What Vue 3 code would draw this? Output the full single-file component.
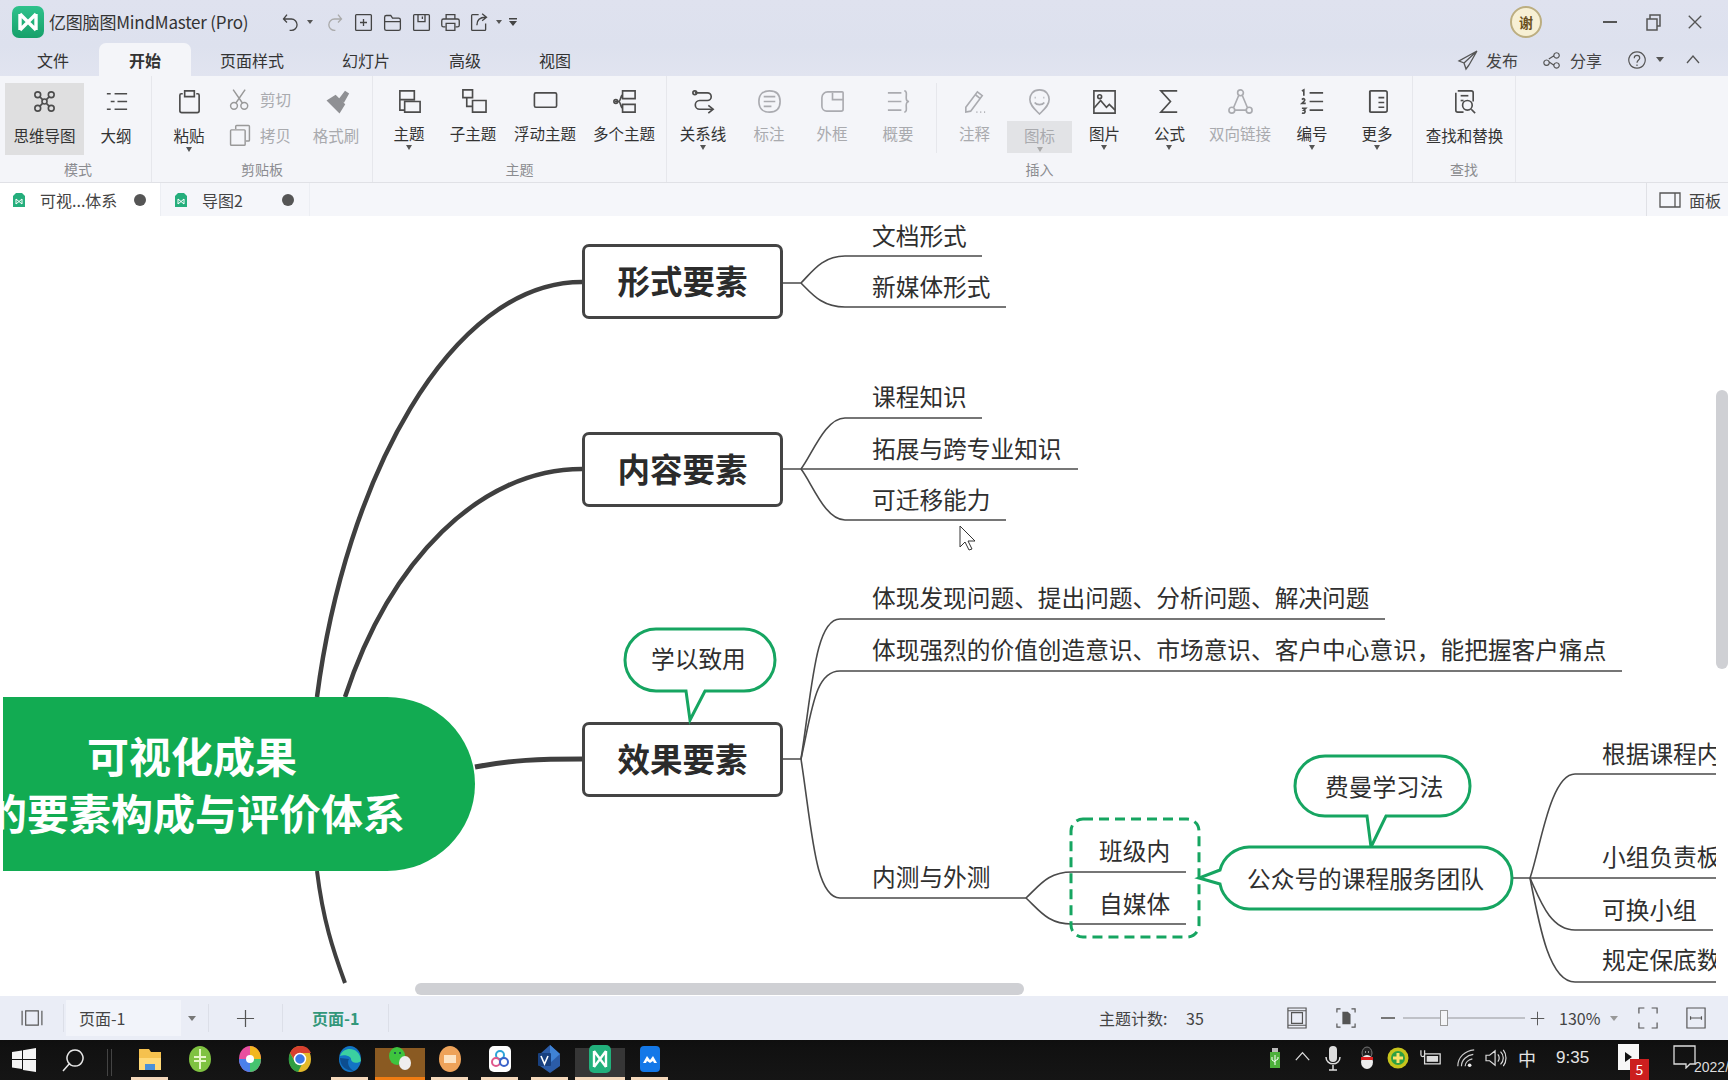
<script setup>
const c = (x, y, r) => `M${x - r} ${y}a${r} ${r} 0 1 0 ${2 * r} 0a${r} ${r} 0 1 0 ${-2 * r} 0Z`
const ICONS = {
  map: [c(7, 7, 3), c(21, 7, 3), c(7, 21, 3), c(21, 21, 3), 'M9 9l3 3M19 9l-3 3M9 19l3-3M19 19l-3-3', c(14, 14, 2.6)],
  outline: ['M4 6h4M12 6h13M8 14h4M15 14h10M4 22h4M12 22h13'],
  paste: ['M7 6h-1.5a1.5 1.5 0 0 0-1.5 1.5v16a2 2 0 0 0 2 2h16a2 2 0 0 0 2-2v-16a1.5 1.5 0 0 0-1.5-1.5H21', 'M9 3h10v6H9z'],
  brush: ['M13 8l9 9-5 8-12-12z', 'M17 12l6-8 3 2-5 9'],
  topic: ['M4 3h15v9H4zM4 12v11h5M9 14h16v11H9z'],
  subtopic: ['M3 2h10v8H3zM7 10v9h6M13 13h14v12H13z'],
  floating: ['M4 5h20a1.500 1.500 0 0 1 1.500 1.500v12a1.500 1.500 0 0 1-1.500 1.500H4a1.500 1.500 0 0 1-1.500-1.500v-12A1.500 1.500 0 0 1 4 5z'],
  multi: ['M12 3h13v8H12zM12 17h13v8H12zM4 14h4M8 14c2 0 2-7 4-7M8 14c2 0 2 7 4 7', c(5, 14, 2)],
  relation: ['M5 5h13a4 4 0 0 1 0 8h-8a4 4 0 0 0 0 9h13', 'M19 18l5 4-5 4', c(5, 5, 2)],
  callout: ['M14 3c7 0 11 4 11 11s-4 11-11 11c-7 0-11-4-11-11s4-11 11-11z', 'M8 9h12M8 14h12M8 19h8'],
  frame: ['M9 4h15a1 1 0 0 1 1 1v17a2 2 0 0 1-2 2H8a5 5 0 0 1-5-5v-9a6 6 0 0 1 6-6z', 'M14 5v7h11'],
  summary: ['M3 5h14M3 14h14M3 23h14', 'M20 3c3 0 2 4 2 7s1 4 3 4c-2 0-3 1-3 4s1 7-2 7'],
  note: ['M5 20L17 4l5 4L10 24l-5 1z', 'M15 7l5 4', 'M16 25h1M20 25h1M24 25h1'],
  emoji: ['M14 2c7 0 10 5 10 10 0 6-5 10-10 15-5-5-10-9-10-15 0-5 3-10 10-10z', 'M9 10h1M18 10h1', 'M9 15c2 3 8 3 10 0'],
  image: ['M3 3h22v23H3z', 'M3 21l7-8 6 7 3-3 6 6', c(9, 9, 2)],
  sum: ['M22 3H5l10 11L5 25h17'],
  link: [c(14, 5, 3), c(5, 23, 3), c(23, 23, 3), 'M12 8l-5 12M16 8l5 12M8 23h12'],
  number: ['M11 5h14M11 14h14M11 23h14', 'M3 3l2-1v6M3 12c2-2 4 0 2 2l-2 2h4M3 21h4l-2 2c2 0 2 4-2 3'],
  more: ['M7 3h15a2 2 0 0 1 2 2v18a2 2 0 0 1-2 2H7a1 1 0 0 1-1-1V4a1 1 0 0 1 1-1z', 'M15 10h6M15 15h6M15 20h6', 'M6 3v22'],
  find: ['M7 3h14a2 2 0 0 1 2 2v9M13 25H7a2 2 0 0 1-2-2V5', 'M10 8h8', c(17, 18, 5), 'M21 22l4 4', 'M10 13h3'],
  scissors: [c(7, 22, 4), c(19, 22, 4), 'M9 19L20 3M17 19L6 3'],
  copy: ['M9 7V4a1 1 0 0 1 1-1h14a1 1 0 0 1 1 1v16a1 1 0 0 1-1 1h-3', 'M4 8h15a1 1 0 0 1 1 1v16a1 1 0 0 1-1 1H4a1 1 0 0 1-1-1V9a1 1 0 0 1 1-1z']
}
const groups = [
  { label: '模式', w: 152, pad: 5, items: [
    { t: '思维导图', i: 'map', w: 79, on: true }, { t: '大纲', i: 'outline', w: 64 } ] },
  { label: '剪贴板', w: 221, pad: 0, items: [
    { t: '粘贴', i: 'paste', w: 74, caret: true }, { clip: true, w: 74 }, { t: '格式刷', i: 'brush', w: 72, dim: true } ] },
  { label: '主题', w: 294, pad: 0, tight: true, items: [
    { t: '主题', i: 'topic', w: 72, caret: true }, { t: '子主题', i: 'subtopic', w: 56 }, { t: '浮动主题', i: 'floating', w: 88 }, { t: '多个主题', i: 'multi', w: 70 } ] },
  { label: '插入', w: 746, pad: 0, tight: true, items: [
    { t: '关系线', i: 'relation', w: 72, caret: true }, { t: '标注', i: 'callout', w: 60, dim: true }, { t: '外框', i: 'frame', w: 66, dim: true }, { t: '概要', i: 'summary', w: 66, dim: true },
    { sep: true },
    { t: '注释', i: 'note', w: 65, dim: true }, { t: '图标', i: 'emoji', w: 65, dim: true, caret: true, hl: true }, { t: '图片', i: 'image', w: 65, caret: true }, { t: '公式', i: 'sum', w: 65, caret: true }, { t: '双向链接', i: 'link', w: 76, dim: true }, { t: '编号', i: 'number', w: 68, caret: true }, { t: '更多', i: 'more', w: 62, caret: true } ] },
  { label: '查找', w: 103, pad: 0, items: [ { t: '查找和替换', i: 'find', w: 103 } ] }
]
const menus = [
  { t: '文件', w: 85 }, { t: '开始', w: 92, on: true }, { t: '页面样式', w: 122 }, { t: '幻灯片', w: 106 }, { t: '高级', w: 92 }, { t: '视图', w: 88 }
]
const labels = [
  { t: '文档形式', x: 872, y: 237 }, { t: '新媒体形式', x: 872, y: 288 },
  { t: '课程知识', x: 872, y: 398 }, { t: '拓展与跨专业知识', x: 872, y: 450 }, { t: '可迁移能力', x: 872, y: 501 },
  { t: '体现发现问题、提出问题、分析问题、解决问题', x: 872, y: 599 },
  { t: '体现强烈的价值创造意识、市场意识、客户中心意识，能把握客户痛点', x: 872, y: 651 },
  { t: '内测与外测', x: 872, y: 878 }, { t: '班级内', x: 1099, y: 852 }, { t: '自媒体', x: 1099, y: 905 },
  { t: '根据课程内', x: 1602, y: 755 }, { t: '小组负责板', x: 1602, y: 858 }, { t: '可换小组', x: 1602, y: 911 }, { t: '规定保底数', x: 1602, y: 961 }
]
const boxes = [
  { t: '形式要素', y: 244 }, { t: '内容要素', y: 432 }, { t: '效果要素', y: 722 }
]
const thin = [
  'M782 283H801C812 272 822 256 845 256H982', 'M801 283C812 294 822 307 845 307H1006',
  'M782 469H801C812 455 825 418 845 418H982', 'M801 469H1078', 'M801 469C812 483 825 520 845 520H1006',
  'M782 759H801C812 690 815 619 840 619H1385', 'M801 759C812 710 815 671 840 671H1622', 'M801 759C812 830 815 898 840 898H1026',
  'M1026 898C1040 885 1048 872 1072 872H1186', 'M1026 898C1040 911 1048 924 1072 924H1186',
  'M1512 878H1530C1540 850 1550 774 1575 774H1716', 'M1530 878H1716', 'M1530 878C1540 900 1550 930 1575 930H1713', 'M1530 878C1540 930 1550 982 1575 982H1716'
]
const thick = [
  { d: 'M317 697C345 480 450 282 582 282', w: 4.5 }, { d: 'M345 697C390 560 480 469 582 469', w: 4.5 },
  { d: 'M475 767C510 760 540 759 582 759', w: 5 }, { d: 'M317 871C323 920 333 950 345 983', w: 4 }
]
const tiles = [
  { k: 'files' }, { k: 'green' }, { k: 'color' }, { k: 'chrome' }, { k: 'edge' }, { k: 'wechat', on: 'w' }, { k: 'orange' }, { k: 'cloud' }, { k: 'visio' }, { k: 'mm', on: 'm' }, { k: 'blue' }
]
</script>

<template>
  <div class="app">
    <header class="title">
      <div class="row-top">
        <svg class="logo" viewBox="0 0 32 32">
          <defs><linearGradient id="lg" x1="0" y1="0" x2="0" y2="1"><stop offset="0" stop-color="#2fc28c" /><stop offset="1" stop-color="#16a06a" /></linearGradient></defs>
          <rect width="32" height="32" rx="7" fill="url(#lg)" />
          <path d="M8 8v16M24 8v16M8 8l16 16M24 8L8 24" fill="none" stroke="#fff" stroke-width="3.4" />
        </svg>
        <span class="app-name">亿图脑图MindMaster (Pro)</span>
        <div class="quick">
          <svg class="q" viewBox="0 0 24 24"><path d="M8 3L4 8l4 4M4 8h9a6 6 0 0 1 0 13h-2" /></svg>
          <i class="caret small-c" />
          <svg class="q faint" viewBox="0 0 24 24"><path d="M16 3l4 5-4 4M20 8h-8a6 6 0 0 0 0 13h1" /></svg>
          <svg class="q" viewBox="0 0 24 24"><path d="M4 3h16a1 1 0 0 1 1 1v16a1 1 0 0 1-1 1H4a1 1 0 0 1-1-1V4a1 1 0 0 1 1-1zM12 8v8M8 12h8" /></svg>
          <svg class="q" viewBox="0 0 24 24"><path d="M3 19V6a2 2 0 0 1 2-2h5l2 3h7a2 2 0 0 1 2 2v10a2 2 0 0 1-2 2H5a2 2 0 0 1-2-2zM3 11h18" /></svg>
          <svg class="q" viewBox="0 0 24 24"><path d="M4 3h16a1 1 0 0 1 1 1v16a1 1 0 0 1-1 1H4a1 1 0 0 1-1-1V4a1 1 0 0 1 1-1zM8 3v8h8V3M13 5v3" /></svg>
          <svg class="q" viewBox="0 0 24 24"><path d="M7 8V3h10v5M6 17H4a2 2 0 0 1-2-2v-5a2 2 0 0 1 2-2h16a2 2 0 0 1 2 2v5a2 2 0 0 1-2 2h-2M7 13h10v8H7z" /></svg>
          <svg class="q" viewBox="0 0 24 24"><path d="M11 3H4a1 1 0 0 0-1 1v16a1 1 0 0 0 1 1h14a1 1 0 0 0 1-1v-7M9 15c0-6 4-9 10-9M15 2l5 4-5 4" /></svg>
          <i class="caret small-c" />
          <svg class="qmore" viewBox="0 0 10 12"><path d="M1 2h8v1.5H1zM1 5l4 0 4 0-4 5z" /></svg>
        </div>
        <div class="win">
          <span class="avatar">谢</span>
          <span class="w-min" />
          <svg class="w-max" viewBox="0 0 18 18"><path d="M3 6h10v11H3zM6 6V2h10v11h-3" /></svg>
          <svg class="w-close" viewBox="0 0 18 18"><path d="M2 2l14 14M16 2L2 16" /></svg>
        </div>
      </div>
      <div class="row-menu">
        <span v-for="m in menus" :key="m.t" class="menu" :class="{ on: m.on }" :style="{ width: m.w + 'px' }">{{ m.t }}</span>
        <div class="actions">
          <svg class="act send" viewBox="0 0 22 22"><path d="M20 2L2 12l5 2 2 6 3-4M20 2L7 14M20 2l-8 14" /></svg>
          <span class="act-t">发布</span>
          <svg class="act share" viewBox="0 0 22 22"><path d="M5 11a3 3 0 1 0 .01 0zM16 3a3 3 0 1 0 .01 0zM16 14a3 3 0 1 0 .01 0zM7.5 10l6-4M7.500 13l6 4" /></svg>
          <span class="act-t t-share">分享</span>
          <svg class="act help" viewBox="0 0 22 22"><path d="M11 2a9 9 0 1 0 .01 0zM8 9c0-4 6-4 6 0 0 2-3 2-3 5M11 16v1.500" /></svg>
          <i class="caret" />
          <svg class="act up" viewBox="0 0 16 16"><path d="M2 11l6-7 6 7" /></svg>
        </div>
      </div>
    </header>

    <section class="ribbon">
      <div v-for="(g, gi) in groups" :key="gi" class="group" :class="{ tight: g.tight }" :style="{ width: g.w + 'px' }">
        <div class="g-items" :style="{ paddingLeft: g.pad + 'px' }">
          <template v-for="(it, ii) in g.items" :key="ii">
            <i v-if="it.sep" class="sep" />
            <div v-else-if="it.clip" class="clip" :style="{ width: it.w + 'px' }">
              <div class="clip-row">
                <svg class="ic-s" viewBox="0 0 28 28"><path v-for="d in ICONS.scissors" :key="d" :d="d" /></svg><span>剪切</span>
              </div>
              <div class="clip-row">
                <svg class="ic-s" viewBox="0 0 28 28"><path v-for="d in ICONS.copy" :key="d" :d="d" /></svg><span>拷贝</span>
              </div>
            </div>
            <div v-else class="item" :class="{ dim: it.dim, on: it.on }" :style="{ width: it.w + 'px' }">
              <svg class="ic" :class="{ solid: it.i === 'brush' }" viewBox="0 0 28 28"><path v-for="d in ICONS[it.i]" :key="d" :d="d" /></svg>
              <span class="lab" :class="{ hl: it.hl }">{{ it.t }}<i v-if="it.caret" class="caret under" /></span>
            </div>
          </template>
        </div>
        <div class="g-label" :style="{ paddingLeft: g.pad + 'px' }">{{ g.label }}</div>
      </div>
    </section>

    <nav class="tabs">
      <div class="tab active">
        <svg class="doc" viewBox="0 0 12 14"><path d="M3 0h6l3 3v11H0V3z" fill="#25ae7c" /><path d="M3 6v5M9 6v5M3 6l6 5M9 6l-6 5" stroke="#fff" fill="none" /></svg>
        <span class="tab-t">可视...体系</span><i class="dot" />
      </div>
      <div class="tab second">
        <svg class="doc" viewBox="0 0 12 14"><path d="M3 0h6l3 3v11H0V3z" fill="#25ae7c" /><path d="M3 6v5M9 6v5M3 6l6 5M9 6l-6 5" stroke="#fff" fill="none" /></svg>
        <span class="tab-t t2">导图2</span><i class="dot" />
      </div>
      <div class="panel">
        <svg viewBox="0 0 22 16"><path d="M1 1h20v14H1zM16 1v14" /></svg><span>面板</span>
      </div>
    </nav>

    <main class="canvas">
      <div class="stage">
        <svg class="wires" viewBox="0 216 1728 780">
          <path v-for="d in thin" :key="d" :d="d" class="w-thin" />
          <path v-for="t in thick" :key="t.d" :d="t.d" class="w-thick" :stroke-width="t.w" />
        </svg>

        <div class="root"><div class="root-t">可视化成果</div><div class="root-t">的要素构成与评价体系</div></div>

        <div v-for="b in boxes" :key="b.t" class="box" :style="{ top: b.y - 216 + 'px' }">{{ b.t }}</div>
        <span v-for="l in labels" :key="l.t" class="lbl" :style="{ left: l.x + 'px', top: l.y - 216 - 18 + 'px' }">{{ l.t }}</span>

        <svg class="bubble-svg" viewBox="0 216 1728 780">
          <path class="bub" d="M656 629H744A31 31 0 0 1 775 660A31 31 0 0 1 744 691H705L690 720L686 691H656A31 31 0 0 1 625 660A31 31 0 0 1 656 629Z" />
          <path class="bub" d="M1325 756H1440A30 30 0 0 1 1470 786A30 30 0 0 1 1440 816H1386L1371 847L1367 816H1325A30 30 0 0 1 1295 786A30 30 0 0 1 1325 756Z" />
          <path class="bub" d="M1249 847H1481A31 31 0 0 1 1512 878A31 31 0 0 1 1481 909H1249A31 31 0 0 1 1220 884L1199 878L1220 870A31 31 0 0 1 1249 847Z" />
          <rect class="dash" x="1071" y="819" width="128" height="118" rx="12" />
        </svg>
        <span class="lbl bub-a">学以致用</span>
        <span class="lbl bub-b">费曼学习法</span>
        <span class="lbl bub-c">公众号的课程服务团队</span>

        <svg class="cursor" viewBox="0 0 18 26"><path d="M1 1v21l5-5 4 8 3-1-4-8h7z" /></svg>
      </div>

      <div class="vbar" />
      <div class="hbar" />
    </main>

    <footer class="status">
      <svg class="s-side" viewBox="0 0 24 20"><path d="M1 2v16M23 2v16M5 2h14v16H5z" /></svg>
      <i class="ssep s1" />
      <div class="pagesel"><span>页面-1</span></div>
      <i class="caret s-car" />
      <i class="ssep s2" />
      <svg class="s-plus" viewBox="0 0 20 20"><path d="M10 1v18M1 10h18" /></svg>
      <i class="ssep s3" />
      <span class="s-page">页面-1</span>
      <i class="ssep s4" />
      <span class="s-count">主题计数:</span><span class="s-num">35</span>
      <svg class="s-ic fit" viewBox="0 0 22 24"><path d="M1 1h20v22H1zM5 6h12v12H5zM1 4h20M1 20h20" /></svg>
      <svg class="s-ic fit2" viewBox="0 0 22 24"><path d="M1 6V2h4M17 2h4v4M21 18v4h-4M5 22H1v-4" /><path d="M7 5h6l3 3v11H7z" class="fill" /></svg>
      <span class="z-minus" />
      <div class="slider"><i /></div>
      <svg class="s-plus z-plus" viewBox="0 0 20 20"><path d="M10 1v18M1 10h18" /></svg>
      <span class="zoomv">130%</span>
      <i class="caret z-car" />
      <svg class="s-ic full" viewBox="0 0 22 24"><path d="M1 7V1h6M15 1h6v6M21 17v6h-6M7 23H1v-6" /></svg>
      <svg class="s-ic fw" viewBox="0 0 22 24"><path d="M1 1h20v22H1zM5 12h12M5 10v4M17 10v4" /></svg>
    </footer>

    <div class="taskbar">
      <svg class="win-logo" viewBox="0 0 24 24"><path d="M0 4l10-1.500V11H0zM11 2.300L24 0v11H11zM0 12h10v9L0 19.500zM11 12h13v12l-13-2z" /></svg>
      <svg class="search" viewBox="0 0 24 24"><path d="M14 2a8 8 0 1 0 .01 0zM9 15L2 23" /></svg>
      <i class="tsep" />
      <div v-for="t in tiles" :key="t.k" class="tile" :class="[t.k, t.on ? 'on-' + t.on : '']">
        <svg viewBox="0 0 30 30">
          <template v-if="t.k === 'files'"><path d="M4 5h10l2 3h10v18H4z" fill="#f5c14e" /><path d="M4 14h22v12H4z" fill="#ffd978" /><path d="M10 20h10v6H10z" fill="#4a90d9" /></template>
          <template v-else-if="t.k === 'green'"><ellipse cx="15" cy="15" rx="11" ry="13" fill="#7fc241" /><path d="M9 13h12M9 17h12M15 5v20" stroke="#e6f6c8" stroke-width="2" fill="none" /></template>
          <template v-else-if="t.k === 'color'"><ellipse cx="15" cy="15" rx="11" ry="13" fill="#e94fa0" /><path d="M15 2a11 13 0 0 1 11 13H15z" fill="#f2b71e" /><path d="M26 15a11 13 0 0 1-11 13V15z" fill="#46c36f" /><path d="M15 28A11 13 0 0 1 4 15h11z" fill="#4a80ea" /><circle cx="15" cy="15" r="4" fill="#fff" /></template>
          <template v-else-if="t.k === 'chrome'"><ellipse cx="15" cy="15" rx="11" ry="13" fill="#e3b92b" /><path d="M15 2A11 13 0 0 0 5 9l5 8 5-8h11a11 13 0 0 0-11-7z" fill="#d8402f" /><path d="M5 9a11 13 0 0 0 8 19l5-10H10z" fill="#2f9e44" /><circle cx="15" cy="15" r="5.500" fill="#3b78e7" stroke="#fff" stroke-width="1.500" /></template>
          <template v-else-if="t.k === 'edge'"><ellipse cx="15" cy="15" rx="11" ry="13" fill="#1273c4" /><path d="M5 12C8 2 25 2 26 17c-3 3-10 2-10-2 0-3-7-5-11-3z" fill="#3bd0a0" /><path d="M5 14c0 8 6 13 14 13-6-3-7-9-5-12z" fill="#0c4d8f" /></template>
          <template v-else-if="t.k === 'wechat'"><ellipse cx="12" cy="12" rx="8" ry="9" fill="#3ec43e" /><ellipse cx="20" cy="19" rx="6" ry="7" fill="#eee" /><circle cx="10" cy="9" r="1" fill="#145" /><circle cx="15" cy="9" r="1" fill="#145" /></template>
          <template v-else-if="t.k === 'orange'"><ellipse cx="15" cy="15" rx="11" ry="13" fill="#eea35a" /><path d="M9 11h12v8H9z" fill="#fde4c4" /></template>
          <template v-else-if="t.k === 'cloud'"><rect x="4" y="2" width="22" height="26" rx="5" fill="#fff" /><circle cx="15" cy="11" r="4" fill="none" stroke="#2da4d8" stroke-width="2" /><circle cx="11" cy="18" r="4" fill="none" stroke="#e0588c" stroke-width="2" /><circle cx="19" cy="18" r="4" fill="none" stroke="#3a62c9" stroke-width="2" /></template>
          <template v-else-if="t.k === 'visio'"><path d="M15 1l10 9v12l-10 7-10-7V10z" fill="#2b5ca8" /><path d="M15 1l10 9-10 9z" fill="#3f83d6" /><rect x="3" y="9" width="13" height="13" rx="1" fill="#18407f" /><path d="M6 12l3.500 8 3.500-8" stroke="#fff" fill="none" stroke-width="1.600" /></template>
          <template v-else-if="t.k === 'mm'"><rect x="4" y="1" width="22" height="28" rx="5" fill="#22b07c" /><path d="M9 7v16M21 7v16M9 7l12 16M21 7L9 23" stroke="#fff" stroke-width="2.400" fill="none" /></template>
          <template v-else><rect x="5" y="2" width="20" height="26" rx="4" fill="#1478e8" /><path d="M8 19l4-7 3 4 3-4 4 7h-3l-1-2-3 2-3-2-1 2z" fill="#fff" /></template>
        </svg>
      </div>
      <div class="tray">
        <svg class="t-usb" viewBox="0 0 12 22"><path d="M1 5h10v16H1z" fill="#4caf3a" /><path d="M3 1h6v4H3z" fill="#bbb" /><path d="M6 8v10M3 10v3l3 2M9 10v2l-3 2" stroke="#fff" fill="none" /></svg>
        <svg class="t-up" viewBox="0 0 18 12"><path d="M1 11l8-9 8 9" /></svg>
        <svg class="t-mic" viewBox="0 0 16 26"><rect x="4" y="1" width="8" height="16" rx="4" fill="#ddd" /><path d="M1 12c0 9 14 9 14 0M8 20v5M4 25h8" stroke="#ddd" stroke-width="1.500" fill="none" /></svg>
        <svg class="t-qq" viewBox="0 0 18 24"><ellipse cx="9" cy="7" rx="5" ry="6" fill="#222" stroke="#777" /><ellipse cx="9" cy="16" rx="6" ry="7" fill="#eee" /><path d="M3 11h12v3H3z" fill="#e02020" /><path d="M7 6h1M10 6h1" stroke="#fff" /></svg>
        <svg class="t-g" viewBox="0 0 22 22"><circle cx="11" cy="11" r="10.500" fill="#c7c41c" /><circle cx="11" cy="11" r="7" fill="#2ea043" /><path d="M11 6v10M6 11h10" stroke="#ffe16b" stroke-width="3" /></svg>
        <svg class="t-bat" viewBox="0 0 24 18"><path d="M5 5h17v11H5zM8 8h11v5H8zM1 1v5a2 2 0 0 0 4 0V1" stroke="#ddd" fill="none" stroke-width="1.400" /><path d="M8 8h11v5H8z" fill="#ddd" /></svg>
        <svg class="t-wifi" viewBox="0 0 22 22"><path d="M2 20C2 10 10 3 20 2M6 20c0-7 6-12 13-13M10 20c0-4 4-7 8-8" stroke="#ccc" fill="none" stroke-width="1.300" /><circle cx="15" cy="19" r="2" fill="#eee" /></svg>
        <svg class="t-vol" viewBox="0 0 24 22"><path d="M1 8h4l6-5v16l-6-5H1zM14 7c2 2 2 6 0 8M17 4c4 4 4 10 0 14M20 2c4 5 4 13 0 18" stroke="#ddd" fill="none" stroke-width="1.300" /></svg>
        <span class="t-zh">中</span>
        <span class="t-time">9:35</span>
        <div class="t-box"><i /><b>5</b></div>
        <svg class="t-note" viewBox="0 0 24 24"><path d="M1 1h21v18h-5l-4 4v-4H1z" /></svg>
        <span class="t-date">2022/</span>
      </div>
    </div>
  </div>
</template>

<style>
html, body { margin: 0; padding: 0; overflow: hidden; background: #fff; }
</style>

<style scoped>
.app { width: 1728px; height: 1080px; display: flex; flex-direction: column; overflow: hidden; font-family: "Noto Sans CJK SC", "Liberation Sans", sans-serif; color: #333; }
.caret { display: inline-block; width: 0; height: 0; border-left: 4px solid transparent; border-right: 4px solid transparent; border-top: 5px solid #555; }

.title { height: 76px; background: linear-gradient(#dfe2ef, #dde1ee 60%, #e1e4f0); flex: none; }
.row-top { height: 43px; display: flex; align-items: flex-start; position: relative; padding-left: 12px; }
.logo { width: 32px; height: 32px; margin-top: 6px; flex: none; }
.app-name { margin: 9px 0 0 5px; font-size: 17px; line-height: 26px; color: #333; letter-spacing: -0.2px; width: 224px; white-space: nowrap; }
.quick { display: flex; align-items: center; height: 24px; margin: 10px 0 0 7px; }
.q { width: 21px; height: 21px; fill: none; stroke: #444; stroke-width: 1.500; margin-right: 8px; flex: none; }
.q.faint { stroke: #aaa; }
.small-c { border-left-width: 3px; border-right-width: 3px; border-top-width: 4px; margin: 0 11px 0 -2px; flex: none; }
.qmore { width: 10px; height: 12px; fill: #444; margin-left: -5px; }
.win { margin-left: auto; display: flex; align-items: center; height: 44px; position: relative; flex: none; }
.avatar { width: 28px; height: 28px; border-radius: 50%; background: #f7f0d4; border: 2px solid #bcae80; color: #6a5020; font-size: 14px; font-weight: 700; display: flex; align-items: center; justify-content: center; margin-right: 61px; }
.w-min { width: 14px; height: 2px; background: #555; margin-right: 27px; }
.w-max { width: 18px; height: 18px; fill: none; stroke: #555; stroke-width: 1.500; margin-right: 25px; }
.w-close { width: 16px; height: 16px; fill: none; stroke: #555; stroke-width: 1.500; margin-right: 25px; }

.row-menu { height: 33px; display: flex; align-items: stretch; padding-left: 14px; }
.menu { display: flex; align-items: center; justify-content: center; font-size: 16px; color: #333; flex: none; box-sizing: border-box; }
.menu:first-child { padding-right: 7px; }
.menu.on { background: #f4f5f9; font-weight: 700; border-radius: 7px 7px 0 0; }
.actions { margin-left: auto; display: flex; align-items: center; padding-right: 27px; }
.act { width: 20px; height: 20px; fill: none; stroke: #555; stroke-width: 1.300; flex: none; }
.send { width: 22px; height: 22px; }
.act-t { font-size: 16px; color: #444; margin-left: 7px; }
.t-share { margin-left: 8px; }
.share { margin-left: 24px; }
.help { margin-left: 25px; margin-right: 9px; }
.up { width: 16px; height: 16px; margin-left: 21px; }

.ribbon { height: 107px; background: #f4f5f9; display: flex; flex: none; border-bottom: 1px solid #e0e1e6; box-sizing: border-box; }
.group { flex: none; display: flex; flex-direction: column; box-sizing: border-box; border-right: 1px solid #e6e7ec; }
.g-items { display: flex; height: 83px; padding-top: 7px; box-sizing: border-box; }
.item { display: flex; flex-direction: column; align-items: center; flex: none; height: 72px; color: #333; }
.item.on { background: #dfdfe0; }
.ic { width: 27px; height: 27px; fill: none; stroke: #4c4c4c; stroke-width: 1.700; margin-top: 5px; flex: none; }
.ic.solid { fill: #8f9094; stroke: #8f9094; }
.lab { margin-top: 9px; font-size: 15.500px; line-height: 22px; display: flex; flex-direction: column; align-items: center; white-space: nowrap; }
.tight .lab { margin-top: 7px; }
.tight .lab.hl, .lab.hl { background: #e2e3e6; width: 65px; height: 32px; margin-top: 6px; padding-top: 3px; box-sizing: border-box; }
.under { margin-top: 1px; border-left-width: 3.500px; border-right-width: 3.500px; border-top-width: 5px; }
.sep { flex: none; margin: 0 0 0 5px; width: 6px; height: 70px; box-sizing: border-box; border-left: 1px solid #e6e7ec; }
.dim { color: #a9aaae; }
.dim .ic { stroke: #aaabb0; }
.dim .ic.solid { stroke: #8f9094; }
.dim .under { border-top-color: #aaa; }
.clip { display: flex; flex-direction: column; gap: 10px; padding-top: 3px; flex: none; box-sizing: border-box; }
.clip-row { display: flex; align-items: center; font-size: 15.500px; color: #a9aaae; height: 26px; gap: 8px; }
.ic-s { width: 24px; height: 24px; fill: none; stroke: #999; stroke-width: 1.700; margin-left: 2px; }
.g-label { text-align: center; font-size: 14px; color: #8b8c90; line-height: 20px; }

.tabs { height: 33px; background: #f5f6fa; flex: none; display: flex; align-items: stretch; font-size: 16px; }
.tab { display: flex; align-items: center; position: relative; box-sizing: border-box; color: #444; }
.active { width: 160px; background: #fff; padding-left: 13px; }
.second { width: 150px; padding-left: 14px; border-left: 1px solid #eceef3; border-right: 1px solid #eceef3; }
.doc { width: 12px; height: 14px; margin-right: 15px; flex: none; }
.tab-t { width: 94px; white-space: nowrap; }
.t2 { width: 80px; }
.dot { width: 12px; height: 12px; border-radius: 50%; background: #555; flex: none; }
.panel { margin-left: auto; display: flex; align-items: center; width: 82px; box-sizing: border-box; border-left: 1px solid #e0e1e6; padding-left: 12px; gap: 8px; color: #444; }
.panel svg { width: 22px; height: 16px; fill: none; stroke: #555; stroke-width: 1.300; }

.canvas { position: relative; height: 780px; background: #fff; flex: none; overflow: hidden; }
.stage { position: absolute; left: 0; top: 0; width: 1716px; height: 780px; overflow: hidden; }
.wires, .bubble-svg { position: absolute; left: 0; top: 0; width: 1728px; height: 780px; fill: none; }
.w-thin { stroke: #4a4a4a; stroke-width: 1.600; fill: none; }
.w-thick { stroke: #3f3f3f; fill: none; }
.bub { fill: #fff; stroke: #16a561; stroke-width: 3; }
.dash { stroke: #16a561; stroke-width: 3; stroke-dasharray: 10 6; fill: none; }
.root { position: absolute; left: 3px; top: 481px; width: 472px; height: 174px; background: #12ab52; border-radius: 0 88px 88px 0 / 0 87px 87px 0; overflow: hidden; color: #fff; font-weight: 700; font-size: 42px; line-height: 57px; }
.root-t { white-space: nowrap; }
.root-t:first-child { padding: 29px 0 0 84px; }
.root-t:last-child { margin-left: -18px; }
.box { position: absolute; left: 582px; width: 201px; height: 75px; padding-bottom: 4px; box-sizing: border-box; border: 3.500px solid #444; border-radius: 7px; background: #fff; display: flex; align-items: center; justify-content: center; font-size: 32.500px; font-weight: 700; color: #2b2b2b; }
.lbl { position: absolute; font-size: 23.700px; line-height: 32px; color: #2f2f2f; white-space: nowrap; }
.bub-a { left: 651px; top: 426px; }
.bub-b { left: 1325px; top: 554px; }
.bub-c { left: 1247px; top: 646px; }
.cursor { position: absolute; left: 959px; top: 309px; width: 18px; height: 26px; fill: #fff; stroke: #333; stroke-width: 1; }
.vbar { position: absolute; right: 0; top: 174px; width: 12px; height: 279px; border-radius: 6px; background: #cfd0d4; }
.hbar { position: absolute; left: 415px; top: 767px; width: 609px; height: 12px; border-radius: 6px; background: #cfd0d4; }

.status { height: 44px; flex: none; background: #eaedf6; display: flex; align-items: center; position: relative; font-size: 16px; color: #444; }
.status > * { position: absolute; }
.ssep { width: 1px; height: 28px; top: 8px; background: #dcdfe8; }
.s1 { left: 63px; }
.s2 { left: 208px; }
.s3 { left: 282px; }
.s4 { left: 388px; }
.s-side { left: 21px; width: 22px; height: 18px; fill: none; stroke: #555; stroke-width: 1.300; }
.pagesel { left: 66px; width: 115px; height: 36px; top: 4px; background: #f2f4fa; display: flex; align-items: center; padding-left: 13px; box-sizing: border-box; }
.s-car { left: 188px; border-top-color: #777; }
.s-plus { left: 236px; width: 19px; height: 19px; fill: none; stroke: #555; stroke-width: 1.300; }
.s-page { left: 312px; font-weight: 700; color: #33977a; }
.s-count { left: 1099px; }
.s-num { left: 1186px; }
.s-ic { width: 20px; height: 22px; fill: none; stroke: #555; stroke-width: 1.300; }
.fit { left: 1287px; }
.fit2 { left: 1336px; }
.fill { fill: #555; stroke: none; }
.z-minus { left: 1381px; width: 14px; height: 1.500px; background: #777; }
.slider { left: 1403px; width: 122px; height: 2px; background: #bfc1c7; }
.slider i { position: absolute; left: 37px; top: -7px; width: 6px; height: 14px; background: #f4f5f8; border: 1px solid #999; }
.z-plus { left: 1530px; width: 15px; height: 15px; }
.zoomv { left: 1559px; font-size: 16px; }
.z-car { left: 1610px; border-top-color: #999; }
.full { left: 1638px; }
.fw { left: 1686px; }

.taskbar { height: 40px; flex: none; background: linear-gradient(#0f0f0f, #111 20%, #151515); display: flex; position: relative; align-items: stretch; overflow: hidden; }
.win-logo { width: 24px; height: 24px; fill: #f4f4f4; position: absolute; left: 12px; top: 8px; }
.search { width: 24px; height: 24px; fill: none; stroke: #e8e8e8; stroke-width: 1.500; position: absolute; left: 61px; top: 8px; }
.tsep { position: absolute; left: 107px; top: 9px; width: 3px; height: 27px; border-left: 1px solid #444; border-right: 1px solid #444; }
.tile { width: 50px; flex: none; display: flex; justify-content: center; align-items: flex-start; padding-top: 4px; box-sizing: border-box; position: relative; }
.files { margin-left: 125px; }
.tile svg { width: 30px; height: 30px; }
.tile::after { content: ""; position: absolute; left: 6px; right: 7px; bottom: 0; height: 3px; background: #f4d8bb; }
.green::after, .color::after, .chrome::after { display: none; }
.on-w { background: linear-gradient(transparent 8px, #8a5a22 8px); }
.on-w::after { left: 0; right: 0; background: #f07c12; }
.on-m { background: linear-gradient(transparent 8px, #363636 8px); }
.on-m::after { left: 0; right: 0; }
.tray { position: absolute; left: 0; top: 0; width: 1728px; height: 40px; pointer-events: none; }
.tray > * { position: absolute; }
.t-usb { left: 1269px; top: 7px; width: 12px; height: 22px; }
.t-up { left: 1295px; top: 11px; width: 15px; height: 10px; fill: none; stroke: #ddd; stroke-width: 1.500; }
.t-mic { left: 1325px; top: 5px; width: 16px; height: 26px; }
.t-qq { left: 1358px; top: 6px; width: 18px; height: 24px; }
.t-g { left: 1387px; top: 7px; width: 22px; height: 22px; }
.t-bat { left: 1420px; top: 9px; width: 22px; height: 17px; }
.t-wifi { left: 1456px; top: 8px; width: 20px; height: 20px; }
.t-vol { left: 1485px; top: 8px; width: 22px; height: 20px; }
.t-zh { left: 1518px; top: 5px; font-size: 18px; line-height: 26px; color: #e4e4e4; }
.t-time { left: 1556px; top: 5px; font-size: 17px; line-height: 26px; color: #e4e4e4; font-family: "Liberation Sans", sans-serif; }
.t-box { left: 1618px; top: 4px; width: 21px; height: 26px; background: #f7f7f7; }
.t-box i { position: absolute; left: 7px; top: 8px; border-left: 7px solid #111; border-top: 5px solid transparent; border-bottom: 5px solid transparent; }
.t-box b { position: absolute; left: 12px; top: 15px; width: 19px; height: 21px; background: #cc1f1f; color: #fff; font-size: 14px; line-height: 20px; text-align: center; font-weight: 400; }
.t-note { left: 1673px; top: 5px; width: 24px; height: 24px; fill: none; stroke: #ddd; stroke-width: 1.300; }
.t-date { left: 1694px; top: 17px; font-size: 14px; line-height: 20px; color: #ddd; font-family: "Liberation Sans", sans-serif; }
</style>
